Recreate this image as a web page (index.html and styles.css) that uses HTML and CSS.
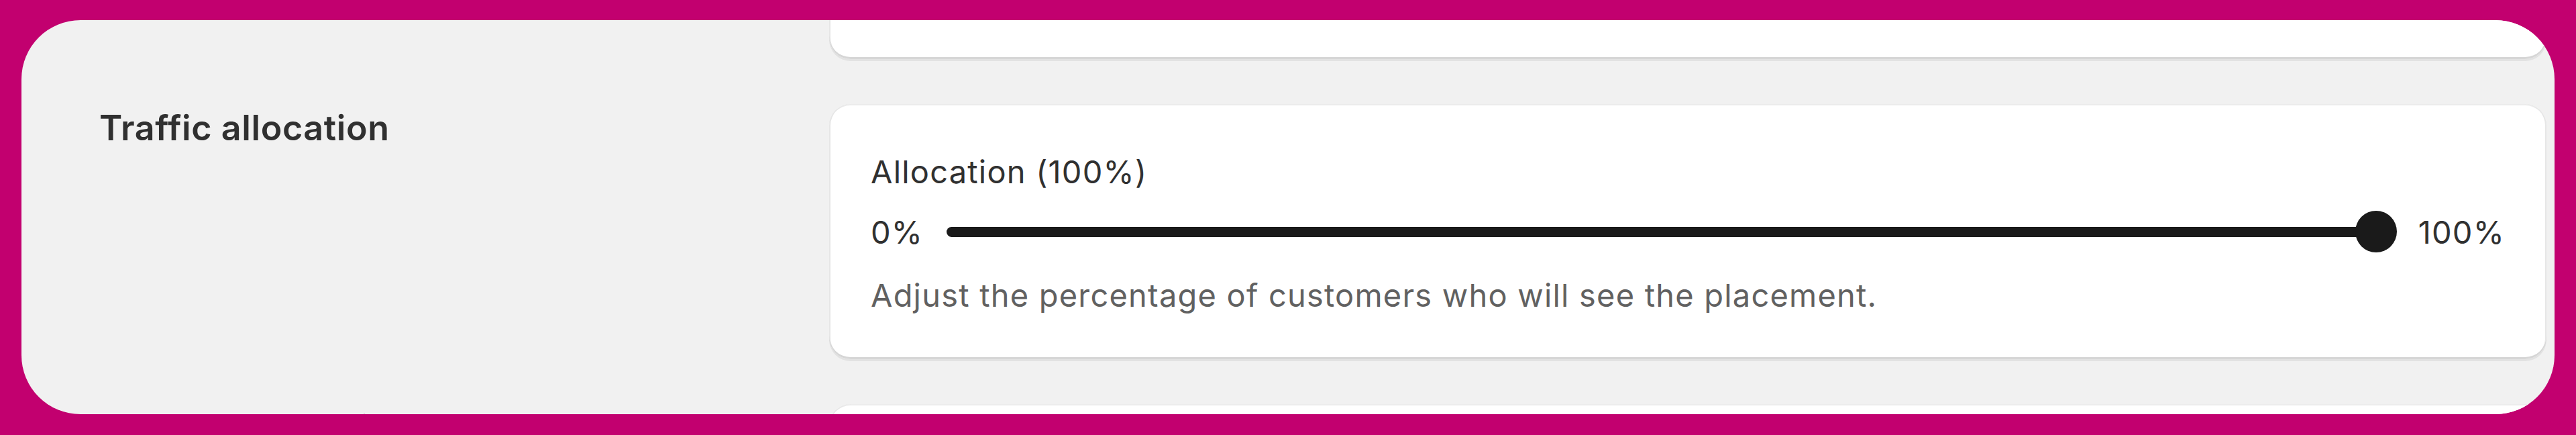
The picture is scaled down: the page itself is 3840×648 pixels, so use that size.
FILE: index.html
```html
<!DOCTYPE html>
<html lang="en">
<head>
<meta charset="utf-8">
<title>Traffic allocation</title>
<link rel="stylesheet" href="styles.css">
</head>
<body>
<div class="frame">
  <div class="panel">
    <div class="page">
      <section class="row row-first">
        <div class="row-title"></div>
        <div class="card card-first"></div>
      </section>

      <section class="row">
        <h2 class="row-title">Traffic allocation</h2>
        <div class="card card-main">
          <div class="field-label">Allocation (100%)</div>
          <div class="slider">
            <span class="slider-end">0%</span>
            <div class="slider-rail" role="slider" aria-valuemin="0" aria-valuemax="100" aria-valuenow="100">
              <div class="slider-fill"></div>
              <div class="slider-thumb"></div>
            </div>
            <span class="slider-end">100%</span>
          </div>
          <p class="help">Adjust the percentage of customers who will see the placement.</p>
        </div>
      </section>

      <section class="row">
        <h2 class="row-title">Holdout allocation</h2>
        <div class="card card-next"></div>
      </section>
    </div>
  </div>
</div>
</body>
</html>
```

FILE: styles.css
```css
* {
  box-sizing: border-box;
}

html, body {
  margin: 0;
  padding: 0;
}

body {
  width: 3840px;
  height: 648px;
  overflow: hidden;
  background: #c2006f;
  font-family: Inter, "Noto Sans", "Liberation Sans", sans-serif;
  color: #303030;
}

.frame {
  height: 648px;
  padding: 30px 32px 31px 32px;
}

.panel {
  height: 587px;
  background: #f1f1f1;
  border-radius: 88px;
  overflow: hidden;
}

.page {
  display: flex;
  flex-direction: column;
  gap: 67px;
  padding: 0 12px 0 116px;
}

.row {
  display: grid;
  grid-template-columns: 1088px 1fr;
  align-items: start;
}

.row-first {
  margin-top: -100px;
}

.row-title {
  margin: 0;
  padding-top: 2px;
  font-size: 52px;
  line-height: 1.3;
  font-weight: 600;
  letter-spacing: 0.6px;
  color: #303030;
}

.card {
  background: #ffffff;
  border-radius: 32px;
  box-shadow:
    0 3px 0 0 rgba(26, 26, 26, 0.07),
    inset 0 -3px 0 0 #d6d6d6,
    inset 2px 0 0 0 #e6e6e6,
    inset -2px 0 0 0 #e6e6e6,
    inset 0 2px 0 0 #ececec;
}

.card-first {
  height: 158px;
}

.card-next {
  height: 200px;
}

.card-main {
  height: 380px;
  padding: 70px 62px 0 62px;
}

.field-label {
  font-size: 47px;
  line-height: 61px;
  letter-spacing: 1.2px;
  color: #303030;
}

.slider {
  display: flex;
  align-items: center;
  height: 62px;
  margin-top: 28px;
  font-size: 47px;
  line-height: 61px;
  letter-spacing: 1.2px;
  color: #303030;
}

.slider-end:first-child {
  margin-right: 35px;
}

.slider-end:last-child {
  margin-left: 32px;
}

.slider-rail {
  flex: 1;
  display: flex;
  align-items: center;
}

.slider-fill {
  flex: 1;
  height: 15px;
  margin-right: -31px;
  background: #1a1a1a;
  border-radius: 8px 0 0 8px;
}

.slider-thumb {
  width: 62px;
  height: 62px;
  border-radius: 50%;
  background: #1a1a1a;
}

.help {
  margin: 33px 0 0 0;
  font-size: 47px;
  line-height: 61px;
  letter-spacing: 1.2px;
  color: #616161;
}
```
